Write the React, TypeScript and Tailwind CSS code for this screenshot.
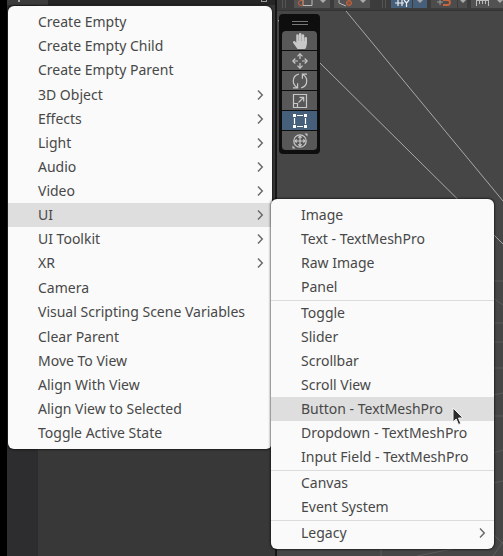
import type { ReactNode } from "react";
import clsx from "clsx";
import { FaHandPaper } from "react-icons/fa";

interface MenuItem {
  label: string;
  submenu?: boolean;
  active?: boolean;
}

const mainMenu: MenuItem[][] = [
  [{ label: "Create Empty" }, { label: "Create Empty Child" }, { label: "Create Empty Parent" }],
  [
    { label: "3D Object", submenu: true },
    { label: "Effects", submenu: true },
    { label: "Light", submenu: true },
    { label: "Audio", submenu: true },
    { label: "Video", submenu: true },
    { label: "UI", submenu: true, active: true },
    { label: "UI Toolkit", submenu: true },
    { label: "XR", submenu: true },
  ],
  [{ label: "Camera" }, { label: "Visual Scripting Scene Variables" }],
  [
    { label: "Clear Parent" },
    { label: "Move To View" },
    { label: "Align With View" },
    { label: "Align View to Selected" },
    { label: "Toggle Active State" },
  ],
];

const uiMenu: MenuItem[][] = [
  [{ label: "Image" }, { label: "Text - TextMeshPro" }, { label: "Raw Image" }, { label: "Panel" }],
  [
    { label: "Toggle" },
    { label: "Slider" },
    { label: "Scrollbar" },
    { label: "Scroll View" },
    { label: "Button - TextMeshPro", active: true },
    { label: "Dropdown - TextMeshPro" },
    { label: "Input Field - TextMeshPro" },
  ],
  [{ label: "Canvas" }, { label: "Event System" }],
  [{ label: "Legacy", submenu: true }],
];

const tools: { name: string; icon: ReactNode; active?: boolean }[] = [
  { name: "View", icon: <FaHandPaper className="h-4 w-4" /> },
  {
    name: "Move",
    icon: (
      <ToolSvg>
        <path d="M8 6V1M8 10v5M6 8H1M10 8h5" />
        <path d="M5.5 3.3 8 .8l2.500 2.500M5.500 12.700 8 15.200l2.500-2.500M3.300 5.500.8 8l2.500 2.500M12.700 5.500 15.200 8l-2.500 2.500" />
      </ToolSvg>
    ),
  },
  {
    name: "Rotate",
    icon: (
      <ToolSvg>
        <path d="M6.800 1.200C3.500 2 1.300 4.800 1.300 8c0 2.600 1.400 5 3.700 6.200M1 14.800h4.600v-4.600" />
        <path d="M9.200 14.800c3.300-.8 5.500-3.600 5.500-6.800 0-2.600-1.400-5-3.700-6.200M15 1.200h-4.600v4.600" />
      </ToolSvg>
    ),
  },
  {
    name: "Scale",
    icon: (
      <ToolSvg>
        <path d="M1.500 1.500h13v13h-13zM1.500 10.500h4v4M6.500 9.500l5-5M7.500 4.300h4.200v4.200" />
      </ToolSvg>
    ),
  },
  {
    name: "Rect",
    active: true,
    icon: (
      <ToolSvg>
        <path d="M2.500 5v6M13.500 5v6M5 2.500h6M5 13.500h6" />
        <path d="M1 1h3v3H1zM12 1h3v3h-3zM1 12h3v3H1zM12 12h3v3h-3z" fill="currentColor" stroke="none" />
      </ToolSvg>
    ),
  },
  {
    name: "Transform",
    icon: (
      <ToolSvg>
        <circle cx="8" cy="8" r="6.200" />
        <path d="M8 3v10M3 8h10M6.300 4.700 8 3l1.700 1.700M6.300 11.300 8 13l1.700-1.700M4.700 6.300 3 8l1.700 1.700M11.300 6.300 13 8l-1.700 1.700" />
        <path d="M12.500.5h3v3zM3.500 15.500h-3v-3z" fill="currentColor" stroke="none" />
      </ToolSvg>
    ),
  },
];

function ToolSvg({ children }: { children: ReactNode }) {
  return (
    <svg viewBox="0 0 16 16" className="h-4 w-4" fill="none" stroke="currentColor" strokeWidth="1.2">
      {children}
    </svg>
  );
}

function Menu({ groups, divided, className }: { groups: MenuItem[][]; divided?: boolean; className: string }) {
  return (
    <div
      role="menu"
      className={clsx("absolute flex flex-col gap-px rounded-md bg-[#fafafa] py-1 shadow-[0_0_2px_1px_rgba(0,0,0,0.5)]", className)}
    >
      {groups.map((group, i) => (
        <div key={i} role="group" className={clsx(divided && i > 0 && "border-t border-[#dcdcdc]")}>
          {group.map((item) => (
            <button
              key={item.label}
              role="menuitem"
              className={clsx("flex h-6 w-full items-center justify-between pr-2 pl-[30px] text-left", item.active && "bg-[#dedede]")}
            >
              {item.label}
              {item.submenu && (
                <svg viewBox="0 0 8 12" className="h-3 w-2" fill="none" stroke="#666" strokeWidth="1.4">
                  <path d="M2 1.500 6.300 6 2 10.500" />
                </svg>
              )}
            </button>
          ))}
        </div>
      ))}
    </div>
  );
}

function Arrow() {
  return (
    <svg viewBox="0 0 6 4" className="h-1 w-[6px] shrink-0" fill="#aaa">
      <path d="M0 0h6L3 3z" />
    </svg>
  );
}

function Grip() {
  return <div className="h-2 w-1 shrink-0 border-x border-[#555]" />;
}

function SceneToolbar() {
  return (
    <div className="flex h-[11px] shrink-0 items-start overflow-hidden border-b border-[#333] bg-[#3c3c3c] pl-[5px]">
      <Grip />
      <button aria-label="Pivot" className="ml-2 flex h-2 w-9 shrink-0 items-start justify-between bg-[#525252] px-1">
        <svg viewBox="0 0 16 8" className="h-2 w-4" fill="none" stroke="#bbb">
          <path d="M5 0v5.500h9V0" />
          <circle cx="3" cy="3" r="2.500" stroke="#c8653c" />
        </svg>
        <Arrow />
      </button>
      <button aria-label="Global" className="ml-1 flex h-2 w-9 shrink-0 items-start justify-between bg-[#525252] px-1">
        <svg viewBox="0 0 16 8" className="h-2 w-4" fill="none" stroke="#bbb">
          <path d="M1 0v3l7 3" />
          <circle cx="11" cy="3" r="2.500" fill="#8a5240" stroke="#c8653c" />
        </svg>
        <Arrow />
      </button>
      <div className="ml-3">
        <Grip />
      </div>
      <button aria-label="Grid snapping" className="ml-[5px] flex h-2 w-[21px] shrink-0 items-start justify-center bg-[#46607c]">
        <svg viewBox="0 0 16 8" className="h-2 w-4" fill="none" stroke="#eee" strokeWidth="1.2">
          <path d="M4 0v6M8 0v6M1 3h9M10 0l2.500 3L15 0M12.500 3v4" />
        </svg>
      </button>
      <button aria-label="Grid options" className="ml-px flex h-2 w-[14px] shrink-0 items-start justify-center bg-[#46607c]">
        <Arrow />
      </button>
      <button aria-label="Snap" className="ml-1 flex h-2 w-[26px] shrink-0 items-start justify-center bg-[#4c4c4c]">
        <svg viewBox="0 0 16 8" className="h-2 w-4" fill="none">
          <path d="M1 2h6M4 0v5" stroke="#999" />
          <path d="M7 0h4.500a2.500 2.500 0 0 1 0 5H7" stroke="#c8653c" strokeWidth="1.8" />
        </svg>
      </button>
      <button aria-label="Snap options" className="ml-px flex h-2 w-[9px] shrink-0 items-start justify-center bg-[#4c4c4c]">
        <Arrow />
      </button>
      <button aria-label="Increment" className="ml-1 flex h-2 w-9 shrink-0 items-start justify-between bg-[#525252] px-1">
        <svg viewBox="0 0 16 8" className="h-2 w-4" fill="none" stroke="#bbb">
          <path d="M1.500 0v6M4.500 1v3M7.500 1v3M10.500 1v3M13.500 0v6M1 .5h13" />
        </svg>
        <Arrow />
      </button>
    </div>
  );
}

function ToolPalette() {
  return (
    <div className="absolute top-[3px] left-[2px] w-[41px] rounded-sm bg-[#0e0e0e] px-[3px] pb-[3px]">
      <div className="flex h-[17px] items-center justify-center">
        <div className="h-1 w-4 border-y border-[#777]" />
      </div>
      {tools.map((tool) => (
        <button
          key={tool.name}
          aria-label={tool.name}
          className={clsx(
            "flex h-5 w-full items-center justify-center border-b border-[#0e0e0e] first-of-type:rounded-t last:rounded-b",
            tool.active ? "bg-[#46607c] text-white" : "bg-[#585858] text-[#c8c8c8]",
          )}
        >
          {tool.icon}
        </button>
      ))}
    </div>
  );
}

function SceneView() {
  return (
    <div className="flex min-w-0 flex-1 flex-col">
      <SceneToolbar />
      <div className="relative flex-1 overflow-hidden">
        {/* canvas bounds and the ground grid, in scene coordinates */}
        <svg className="absolute top-0 left-0 h-[545px] w-[226px]" viewBox="0 0 226 545" fill="none">
          <path d="M69 0 226 190M43 52 226 233M1 9l4 5" stroke="#a8a8a8" />
          <path
            d="M216 270h10M216 287l10 7M216 312h10M216 331h10M216 357h10M216 384l10-2M216 405h10M216 442l10-3M216 472l10-2M216 523l10 10M104 537v8M140 545l40-8M216 545l10-14"
            stroke="#5a5a5a"
          />
        </svg>
        <ToolPalette />
      </div>
    </div>
  );
}

export default function App() {
  return (
    <div className="relative flex min-h-screen overflow-hidden bg-[#464646] font-['Noto_Sans',sans-serif] text-sm text-[#484848]">
      <div className="w-[7px] shrink-0 bg-black" />
      <div className="flex w-[270px] shrink-0 flex-col border-r-2 border-[#161616] bg-[#383838]">
        <div className="flex h-[5px] shrink-0 bg-[#3c3c3c] pl-[11px]">
          <div className="h-[2px] w-[2px] bg-[#aaa]" />
          <div className="ml-7 flex flex-1 justify-end bg-[#262626] pr-2">
            <div className="h-[2px] w-[6px] border-x border-b border-[#999]" />
          </div>
        </div>
        <div className="w-[31px] flex-1 bg-[#2d2d2f]" />
      </div>
      <SceneView />

      <Menu groups={mainMenu} className="top-[6px] left-2 w-[264px]" />
      <Menu groups={uiMenu} divided className="top-[199px] left-[271px] w-[223px]" />

      <svg className="absolute top-[407px] left-[452px] h-[19px] w-[12px]" viewBox="0 0 12 19">
        <path d="M1 1v14l3.200-3 2.300 5.500 2.300-1L6.500 11H11z" fill="#2b2b2b" stroke="#f4f4f4" strokeWidth="1" />
      </svg>
    </div>
  );
}
